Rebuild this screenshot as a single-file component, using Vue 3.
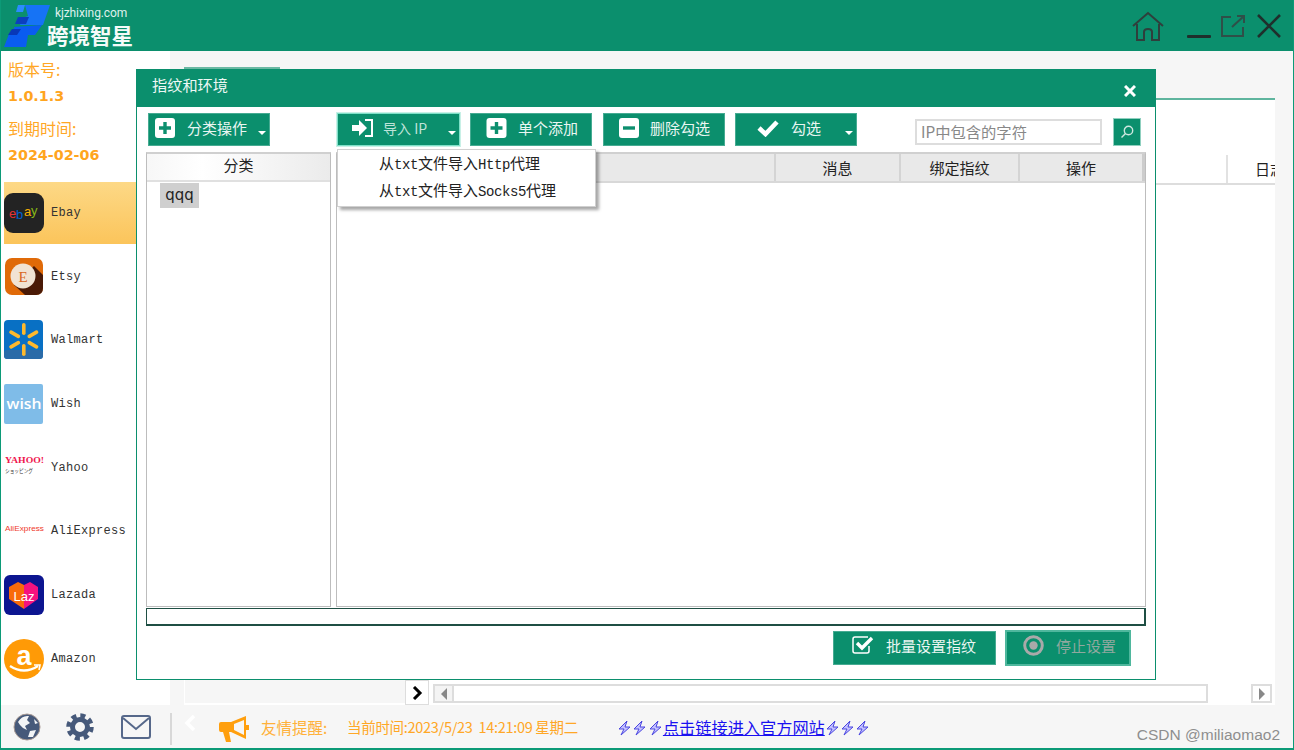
<script setup>
const shops = [
  { key: 'ebay', name: 'Ebay', active: true },
  { key: 'etsy', name: 'Etsy' },
  { key: 'walmart', name: 'Walmart' },
  { key: 'wish', name: 'Wish' },
  { key: 'yahoo', name: 'Yahoo' },
  { key: 'ali', name: 'AliExpress' },
  { key: 'lazada', name: 'Lazada' },
  { key: 'amazon', name: 'Amazon' }
]
const spokes = [0, 60, 120, 180, 240, 300]
</script>

<template>
  <div class="app">
    <header class="topbar">
      <div class="brand">
        <svg class="logo" width="48" height="44" viewBox="0 0 48 44">
          <polygon points="14,0 21,0 19,7 12,7" fill="#2b8cff" />
          <polygon points="21,0 46,0 39,20 16,20 18,13 24,11" fill="#1673f5" />
          <polygon points="14,12 25,12 22,19 11,19" fill="#0b3fbf" />
          <polygon points="10,22 38,20 31,30 24,30 22,42 0,42 5,29 11,27" fill="#0a5cf0" />
          <polygon points="8,24 17,24 13,30 4,30" fill="#0838b8" />
        </svg>
        <div class="brand-text">
          <span class="brand-url">kjzhixing.com</span>
          <span class="brand-name">跨境智星</span>
        </div>
      </div>
      <div class="win-tools">
        <svg class="t-home" width="34" height="32" viewBox="0 0 34 32" fill="none" stroke="#2f3f3c" stroke-width="2">
          <path d="M2 15 L17 2 L32 15" />
          <path d="M6 13 V29 H13 V21 Q13 18 17 18 Q21 18 21 21 V29 H28 V13" />
        </svg>
        <svg class="t-min" width="26" height="24" viewBox="0 0 26 24"><rect x="1" y="19" width="24" height="3" rx="1" fill="#1f2f2c" /></svg>
        <svg class="t-pop" width="26" height="24" viewBox="0 0 26 24" fill="none" stroke="#2f4f48" stroke-width="2">
          <path d="M11 3 H2 V22 H23 V13" />
          <path d="M12 13 L24 2 M17 2 H24 V9" />
        </svg>
        <svg class="t-close" width="26" height="24" viewBox="0 0 26 24" fill="none" stroke="#1f2f2c" stroke-width="2.6"><path d="M2 1 L24 23 M24 1 L2 23" /></svg>
      </div>
    </header>

    <div class="middle">
      <aside class="sidebar">
        <div class="version">
          <div class="v-label">版本号:</div>
          <div class="v-value">1.0.1.3</div>
          <div class="v-label v-gap">到期时间:</div>
          <div class="v-value">2024-02-06</div>
        </div>
        <div v-for="s in shops" :key="s.key" class="shop" :class="{ active: s.active }">
          <svg class="shop-icon" width="40" height="40" viewBox="0 0 40 40">
            <template v-if="s.key === 'ebay'">
              <rect width="40" height="40" rx="9" fill="#232323" />
              <text x="5" y="25" font-size="13" font-family="Liberation Sans" fill="#e53238">e</text>
              <text x="12" y="26" font-size="13" font-family="Liberation Sans" fill="#0064d2">b</text>
              <text x="20" y="23" font-size="13" font-family="Liberation Sans" fill="#f5af02">a</text>
              <text x="27" y="22" font-size="13" font-family="Liberation Sans" fill="#86b817">y</text>
            </template>
            <template v-else-if="s.key === 'etsy'">
              <rect y="1" width="38" height="37" rx="7" x="1" fill="#e06a08" />
              <path d="M30 9 L39 18 V31 Q39 38 32 38 H21 L10 28 Z" fill="#4a1a06" />
              <circle cx="19" cy="19" r="12.5" fill="#f1e3d3" />
              <text x="19" y="24.5" text-anchor="middle" font-size="15" font-family="Liberation Serif" fill="#d9661c">E</text>
            </template>
            <template v-else-if="s.key === 'walmart'">
              <rect width="39" height="39" rx="4" fill="#0870c4" />
              <rect y="30" width="39" height="9" rx="3" fill="#2b6ba8" />
              <g fill="#fdb92d">
                <rect v-for="a in spokes" :key="a" x="18" y="3" width="3.6" height="12" rx="1.8" :transform="`rotate(${a} 19.8 19.5)`" />
              </g>
            </template>
            <template v-else-if="s.key === 'wish'">
              <rect width="39" height="40" rx="2" fill="#7fbce8" />
              <text x="20" y="25" text-anchor="middle" font-size="15" font-weight="600" textLength="35" lengthAdjust="spacingAndGlyphs" font-family="Open Sans" fill="#fff">wish</text>
            </template>
            <template v-else-if="s.key === 'yahoo'">
              <text x="1" y="15" font-size="8.5" font-weight="700" textLength="39" lengthAdjust="spacingAndGlyphs" font-family="Liberation Serif" fill="#f0134d">YAHOO!</text>
              <text x="1" y="25" font-size="5.5" textLength="28" lengthAdjust="spacingAndGlyphs" font-family="Noto Sans CJK JP" fill="#333">ショッピング</text>
            </template>
            <template v-else-if="s.key === 'ali'">
              <text x="1" y="20" font-size="7.5" textLength="39" lengthAdjust="spacingAndGlyphs" font-family="Liberation Sans" fill="#ef3a2c">AliExpress</text>
            </template>
            <template v-else-if="s.key === 'lazada'">
              <rect width="40" height="40" rx="6" fill="#0c1590" />
              <path d="M20 10 L26 7 L34 12 V24 L20 34 Z" fill="#f5127f" />
              <path d="M20 10 L14 7 L5 12 V24 L20 34 Z" fill="#f96a0a" />
              <text x="20" y="26" text-anchor="middle" font-size="13" font-family="Liberation Sans" fill="#fff">Laz</text>
            </template>
            <template v-else>
              <circle cx="20" cy="20" r="20" fill="#ff9a06" />
              <text x="20" y="26" text-anchor="middle" font-size="27" font-weight="700" font-family="Liberation Sans" fill="#fff">a</text>
              <path d="M6 27 Q20 36 34 27" fill="none" stroke="#fff" stroke-width="2.4" />
              <path d="M30 26 L36 26 L35 31" fill="none" stroke="#fff" stroke-width="1.6" />
            </template>
          </svg>
          <span class="shop-name">{{ s.name }}</span>
        </div>
      </aside>

      <main class="main">
        <div class="tabs"><div class="tab"></div></div>
        <section class="panel">
          <div class="bg-head"><div class="bg-cell">日志</div></div>
          <div class="bg-fill"></div>
          <div class="bg-foot">
            <div class="foot-gray"></div>
            <button class="toggle">
              <svg width="12" height="14" viewBox="0 0 12 14" fill="none" stroke="#000" stroke-width="3"><path d="M3 1 L9 7 L3 13" /></svg>
            </button>
            <div class="hscroll">
              <div class="sb-btn"><i class="tri tri-l"></i></div>
              <div class="sb-track"></div>
              <div class="sb-btn sb-right"><i class="tri tri-r"></i></div>
            </div>
          </div>
        </section>
      </main>
    </div>

    <footer class="footer">
      <svg class="f-globe" width="28" height="28" viewBox="0 0 28 28">
        <circle cx="14" cy="14" r="13" fill="#46597a" stroke="#a89a94" stroke-width="1" />
        <path d="M5 9 Q9 2 16 3 L14 7 L17 10 L12 13 L14 17 L10 15 L7 12 Z" fill="#f2f4f6" />
        <path d="M17 18 L23 17 L20 24 L15 24 Z M21 6 L25 10 L22 11 Z" fill="#f2f4f6" />
      </svg>
      <svg class="f-gear" width="28" height="28" viewBox="0 0 28 28" fill="none" stroke="#46597a">
        <circle cx="14" cy="14" r="7.5" stroke-width="5" />
        <circle cx="14" cy="14" r="11.5" stroke-width="4.5" stroke-dasharray="5 4.03" />
      </svg>
      <svg class="f-mail" width="30" height="24" viewBox="0 0 30 24" fill="none" stroke="#56688a" stroke-width="2">
        <rect x="1" y="1" width="28" height="22" rx="2" />
        <path d="M2 3 L15 14 L28 3" />
      </svg>
      <div class="f-divider"></div>
      <svg class="f-back" width="12" height="18" viewBox="0 0 12 18" fill="none" stroke="#fff" stroke-width="3.5"><path d="M10 2 L3 9 L10 16" /></svg>
      <svg class="f-horn" width="32" height="28" viewBox="0 0 32 28">
        <path d="M1 9 Q1 7 3 7 H13 L28 1 V24 L13 17 H11 L13 27 H8 L5 17 H3 Q1 17 1 15 Z" fill="#ff9f0e" />
        <path d="M16 9 L26 5 V20 L16 15 Z" fill="#f6f6f6" />
        <rect x="28" y="10" width="3" height="5" fill="#ff9f0e" />
      </svg>
      <span class="f-notice">友情提醒:</span>
      <span class="f-time">当前时间:2023/5/23&nbsp;&nbsp;14:21:09 星期二</span>
      <a class="f-link" href="#">
        <svg v-for="n in 3" :key="'a' + n" class="bolt" width="15" height="16" viewBox="0 0 15 16"><path d="M10 1 L2 9 H7 L4 15 L13 7 H8 Z" fill="#c4c1ff" stroke="#4a46e0" stroke-width="1" /></svg>点击链接进入官方网站<svg v-for="n in 3" :key="'b' + n" class="bolt" width="15" height="16" viewBox="0 0 15 16"><path d="M10 1 L2 9 H7 L4 15 L13 7 H8 Z" fill="#c4c1ff" stroke="#4a46e0" stroke-width="1" /></svg>
      </a>
    </footer>

    <div class="modal">
      <div class="m-head">
        <span class="m-title">指纹和环境</span>
        <svg class="m-close" width="12" height="12" viewBox="0 0 12 12" fill="none" stroke="#fff" stroke-width="3"><path d="M1 1 L11 11 M11 1 L1 11" /></svg>
      </div>
      <div class="m-body">
        <div class="toolbar">
          <button class="btn b-cat">
            <svg class="ic" width="20" height="20" viewBox="0 0 20 20"><rect width="20" height="20" rx="3" fill="#fff" /><path d="M10 4 V16 M4 10 H16" stroke="#0c8f6e" stroke-width="3.4" /></svg>
            <span>分类操作</span>
            <i class="caret"></i>
          </button>
          <button class="btn b-import">
            <svg class="ic" width="22" height="20" viewBox="0 0 22 20">
              <path d="M0 7 H7 V2 L15 10 L7 18 V13 H0 Z" fill="#fff" />
              <path d="M13 2 H20 V18 H13" fill="none" stroke="#fff" stroke-width="2" />
            </svg>
            <span class="dim">导入 IP</span>
            <i class="caret"></i>
          </button>
          <button class="btn b-add">
            <svg class="ic" width="21" height="20" viewBox="0 0 20 20"><rect width="20" height="20" rx="3" fill="#fff" /><path d="M10 4 V16 M4 10 H16" stroke="#0c8f6e" stroke-width="3.4" /></svg>
            <span>单个添加</span>
          </button>
          <button class="btn b-del">
            <svg class="ic" width="20" height="20" viewBox="0 0 20 20"><rect width="20" height="20" rx="3" fill="#fff" /><path d="M4 10 H16" stroke="#0c8f6e" stroke-width="3.4" /></svg>
            <span>删除勾选</span>
          </button>
          <button class="btn b-check">
            <svg class="ic" width="22" height="18" viewBox="0 0 22 18" fill="none" stroke="#fff" stroke-width="4.6"><path d="M2 9 L8.5 15 L20 3" /></svg>
            <span>勾选</span>
            <i class="caret"></i>
          </button>
          <input class="search" placeholder="IP中包含的字符" />
          <button class="search-btn">
            <svg width="14" height="14" viewBox="0 0 14 14" fill="none" stroke="#cfe8e0" stroke-width="1.4"><circle cx="8.5" cy="5.5" r="4.2" /><path d="M5.5 8.5 L1.5 12.5" /></svg>
          </button>
        </div>

        <div class="panels">
          <div class="cat-panel">
            <div class="cat-head">分类</div>
            <div class="cat-list"><span class="cat-item">qqq</span></div>
          </div>
          <div class="ip-panel">
            <div class="ip-head">
              <div class="col c-rest"></div>
              <div class="col c-msg">消息</div>
              <div class="col c-bind">绑定指纹</div>
              <div class="col c-op">操作</div>
            </div>
          </div>
        </div>

        <div class="status"></div>

        <div class="actions">
          <button class="btn b-batch">
            <svg class="ic" width="23" height="20" viewBox="0 0 23 20" fill="none" stroke="#fff">
              <path d="M16 2 H3 Q1 2 1 4 V16 Q1 18 3 18 H15 Q17 18 17 16 V11" stroke-width="1.5" />
              <path d="M5 8 L10 13 L20 3" stroke-width="3.4" />
            </svg>
            <span>批量设置指纹</span>
          </button>
          <button class="btn b-stop">
            <svg class="ic" width="21" height="21" viewBox="0 0 21 21"><circle cx="10.5" cy="10.5" r="8.8" fill="none" stroke="#a9a9a9" stroke-width="3" /><circle cx="10.5" cy="10.5" r="4.2" fill="#a9a9a9" /></svg>
            <span class="stop-text">停止设置</span>
          </button>
        </div>
      </div>

      <div class="menu">
        <div class="menu-item">从<b>txt</b>文件导入<b>Http</b>代理</div>
        <div class="menu-item">从<b>txt</b>文件导入<b>Socks5</b>代理</div>
      </div>
    </div>

    <div class="watermark">CSDN @miliaomao2</div>
  </div>
</template>

<style scoped>
* { box-sizing: border-box; }
.app {
  position: relative;
  width: 1294px;
  height: 750px;
  overflow: hidden;
  display: flex;
  flex-direction: column;
  background: #f6f6f6;
  border: solid #0c9a77;
  border-width: 0 1px 2px;
  font-family: "Noto Sans CJK SC", sans-serif;
}
button { font-family: inherit; padding: 0; cursor: default; }

/* top bar */
.topbar {
  flex: none;
  height: 51px;
  margin: 0 -1px;
  background: #0b8f6d;
  display: flex;
  justify-content: space-between;
  padding: 0 12px 0 4px;
}
.brand { display: flex; align-items: flex-start; }
.logo { margin-top: 5px; }
.brand-text { display: flex; flex-direction: column; margin-left: -5px; }
.brand-url {
  font: 12px/14px "Roboto", sans-serif;
  color: #dff1ec;
  margin: 6px 0 0 8px;
  letter-spacing: -0.1px;
}
.brand-name {
  font-size: 21.5px;
  line-height: 26px;
  font-weight: 700;
  color: #f5fbf9;
  margin-top: 2px;
  white-space: nowrap;
}
.win-tools { display: flex; align-items: flex-start; }
.t-home { margin-top: 11px; }
.t-min { margin: 16px 0 0 21px; }
.t-pop { margin: 14px 0 0 8px; }
.t-close { margin: 14px 0 0 10px; }

/* middle */
.middle { flex: none; height: 654px; display: flex; }
.sidebar { flex: none; width: 169px; background: #fff; padding-top: 5px; }
.version { padding-left: 7px; height: 125px; }
.v-label { font-size: 16px; line-height: 26px; color: #ffa726; }
.v-value { font: 700 14.3px/26px "DejaVu Sans", sans-serif; color: #ffa51f; padding-top: 1px; }
.v-gap { margin-top: 6px; }
.shop {
  height: 63.7px;
  padding-left: 3px;
  display: flex;
  align-items: center;
  gap: 7px;
}
.shop.active {
  background: linear-gradient(180deg, #fdd987, #fbc45a);
  background-clip: content-box;
  padding: 1px 0 1px 3px;
}
.shop-icon { flex: none; }
.shop-name {
  font: 12px "Liberation Mono", monospace;
  letter-spacing: 0.3px;
  color: #333;
}

.main { flex: 1; min-width: 0; padding: 16px 18px 0 14px; display: flex; flex-direction: column; }
.tabs { flex: none; height: 31px; display: flex; }
.tab {
  width: 96px;
  background: #fff;
  border: 1px solid #6bb8a3;
  border-bottom: 0;
  border-top-width: 2px;
}
.panel {
  flex: 1;
  background: #fff;
  border-top: 2px solid #5fb59e;
  display: flex;
  flex-direction: column;
}
.bg-head {
  flex: none;
  margin-top: 55px;
  height: 30px;
  display: flex;
  justify-content: flex-end;
  border-bottom: 2px solid #ddd;
}
.bg-cell {
  width: 49px;
  border-left: 2px solid #e2e2e2;
  padding-left: 27px;
  font-size: 15px;
  line-height: 28px;
  color: #222;
  overflow: hidden;
  white-space: nowrap;
}
.bg-fill { flex: 1; }
.bg-foot { flex: none; height: 25px; display: flex; align-items: flex-start; }
.foot-gray { width: 221px; height: 23px; background: #f6f6f6; border-left: 1px solid #fff; }
.toggle {
  flex: none;
  width: 24px;
  height: 25px;
  background: #fff;
  border: 1px solid #ddd;
  display: flex;
  align-items: center;
  justify-content: center;
}
.hscroll { flex: 1; display: flex; margin: 4px 3px 0 4px; height: 19px; }
.sb-btn {
  width: 21px;
  flex: none;
  background: #f4f4f4;
  border: 2px solid #ddd;
  display: flex;
  align-items: center;
  justify-content: center;
}
.sb-right { margin-left: 43px; background: #fff; }
.sb-track { flex: 1; border: 2px solid #ddd; border-left: 0; background: #fff; }
.tri { width: 0; height: 0; border-style: solid; border-color: transparent; }
.tri-l { border-width: 6px 6px 6px 0; border-right-color: #888; }
.tri-r { border-width: 6px 0 6px 6px; border-left-color: #888; }

/* footer */
.footer { flex: none; height: 43px; display: flex; align-items: center; background: #f6f6f6; padding-left: 12px; white-space: nowrap; }
.f-gear { margin-left: 25px; }
.f-mail { margin-left: 27px; }
.f-divider { width: 2px; height: 32px; background: #d8d8d8; margin: 4px 0 0 19px; }
.f-back { margin: -8px 0 0 12px; }
.f-horn { margin: 5px 0 0 22px; }
.f-notice { margin-left: 11px; font-size: 15.5px; color: #ffb13a; width: 86px; }
.f-time { font-size: 14.5px; color: #ffa726; width: 270px; letter-spacing: -0.3px; }
.f-link { font-size: 16.2px; color: #1a10f0; text-decoration: underline; }
.bolt { vertical-align: -2px; margin-right: 0.3px; }

/* modal */
.modal {
  position: absolute;
  left: 135px;
  top: 69px;
  width: 1020px;
  height: 611px;
  background: #fff;
  border: 1px solid #0b8f6d;
  border-top: 0;
  display: flex;
  flex-direction: column;
}
.m-head {
  flex: none;
  height: 38px;
  margin: 0 -1px;
  background: #0b8f6d;
  display: flex;
  justify-content: space-between;
  align-items: center;
  padding: 0 20px 0 16px;
}
.m-title { font-size: 15.2px; line-height: 20px; color: #eef8f5; margin-top: -9px; }
.m-close { margin-top: 5px; }
.m-body { flex: 1; padding: 6px 9px 0; display: flex; flex-direction: column; min-height: 0; }
.toolbar { flex: none; height: 33px; display: flex; align-items: flex-start; padding-left: 2px; }
.btn {
  height: 33px;
  background: #0b8f6d;
  border: 1px solid #46ab92;
  color: #eaf6f2;
  font-size: 15px;
  display: flex;
  align-items: center;
  position: relative;
  white-space: nowrap;
  padding-bottom: 4px;
}
.btn .ic { flex: none; }
.caret {
  position: absolute;
  right: 3px;
  top: 17px;
  width: 0;
  height: 0;
  border: 4px solid transparent;
  border-top-color: #fff;
  border-bottom: 0;
}
.b-cat { width: 122px; padding-left: 6px; gap: 12px; }
.b-import { width: 123px; margin-left: 67px; padding-left: 14px; gap: 9px; border-color: #7fe0c8; box-shadow: 0 0 0 1px #c8f0e6; }
.b-add { width: 122px; margin-left: 10px; padding-left: 15px; gap: 11px; }
.b-del { width: 122px; margin-left: 11px; padding-left: 15px; gap: 11px; }
.b-check { width: 122px; margin-left: 10px; padding-left: 21px; gap: 12px; }
.dim { color: #bfe3d9; font-size: 14px; }
.search {
  width: 187px;
  height: 26px;
  margin: 6px 0 0 58px;
  border: 2px solid #ddd;
  padding: 0 4px 3px;
  font: 15.3px "Noto Sans CJK SC", sans-serif;
  outline: none;
}
.search::placeholder { color: #888; opacity: 1; }
.search-btn {
  width: 28px;
  height: 28px;
  margin: 5px 0 0 11px;
  background: #0b8f6d;
  border: 1px solid #8fd0bf;
  display: flex;
  align-items: center;
  justify-content: center;
}

.panels { flex: none; height: 455px; margin-top: 6px; display: flex; gap: 5px; }
.cat-panel { width: 185px; border: 1px solid #bdbdbd; border-top: 2px solid #d0d0d0; display: flex; flex-direction: column; }
.cat-head {
  flex: none;
  height: 28px;
  background: linear-gradient(90deg, #f7f7f7, #fff 30%, #ebebeb);
  border-bottom: 2px solid #e0e0e0;
  text-align: center;
  font-size: 15px;
  line-height: 22px;
  color: #222;
}
.cat-list { padding: 1px 0 0 13px; }
.cat-item {
  display: block;
  width: 39px;
  height: 25px;
  background: #cfcfcf;
  font: 15px/24px "DejaVu Sans", sans-serif;
  color: #222;
  text-align: center;
}
.ip-panel { flex: 1; border: 1px solid #bdbdbd; border-top: 2px solid #d0d0d0; }
.ip-head { height: 29px; display: flex; background: #e9e9e9; border-bottom: 2px solid #d8d8d8; }
.col { font-size: 15px; line-height: 27px; text-align: center; color: #222; border-right: 2px solid #d4d4d4; }
.c-rest { flex: 1; }
.c-msg { width: 125px; }
.c-bind { width: 119px; }
.c-op { width: 125px; border-right: 3px solid #ccc; }
.status { flex: none; height: 18px; margin-top: 1px; border: 2px solid #1f4f44; border-width: 1px 2px 2px 1px; }
.actions { flex: none; display: flex; justify-content: flex-end; align-items: center; gap: 9px; height: 36px; margin-top: 4px; padding-right: 15px; }
.b-batch { width: 163px; height: 34px; padding-left: 18px; padding-bottom: 6px; gap: 11px; font-size: 15px; }
.b-stop { width: 126px; height: 36px; padding-left: 16px; padding-bottom: 6px; gap: 12px; font-size: 15px; border: 2px solid #4fb79d; }
.stop-text { color: #8fa89f; }

.menu {
  position: absolute;
  left: 200px;
  top: 80px;
  width: 259px;
  height: 58px;
  background: #fff;
  border: 1px solid #d0d0d0;
  box-shadow: 3px 3px 3px rgba(0, 0, 0, 0.35);
  padding-top: 1px;
}
.menu-item { height: 27px; padding-left: 41px; font-size: 15px; line-height: 23px; color: #222; white-space: nowrap; }
.menu-item b { font: 400 14px "Liberation Mono", monospace; letter-spacing: -0.4px; }

.watermark {
  position: absolute;
  right: 13px;
  bottom: 4px;
  font: 15.5px "Liberation Sans", sans-serif;
  color: #8e8e8e;
}
</style>
